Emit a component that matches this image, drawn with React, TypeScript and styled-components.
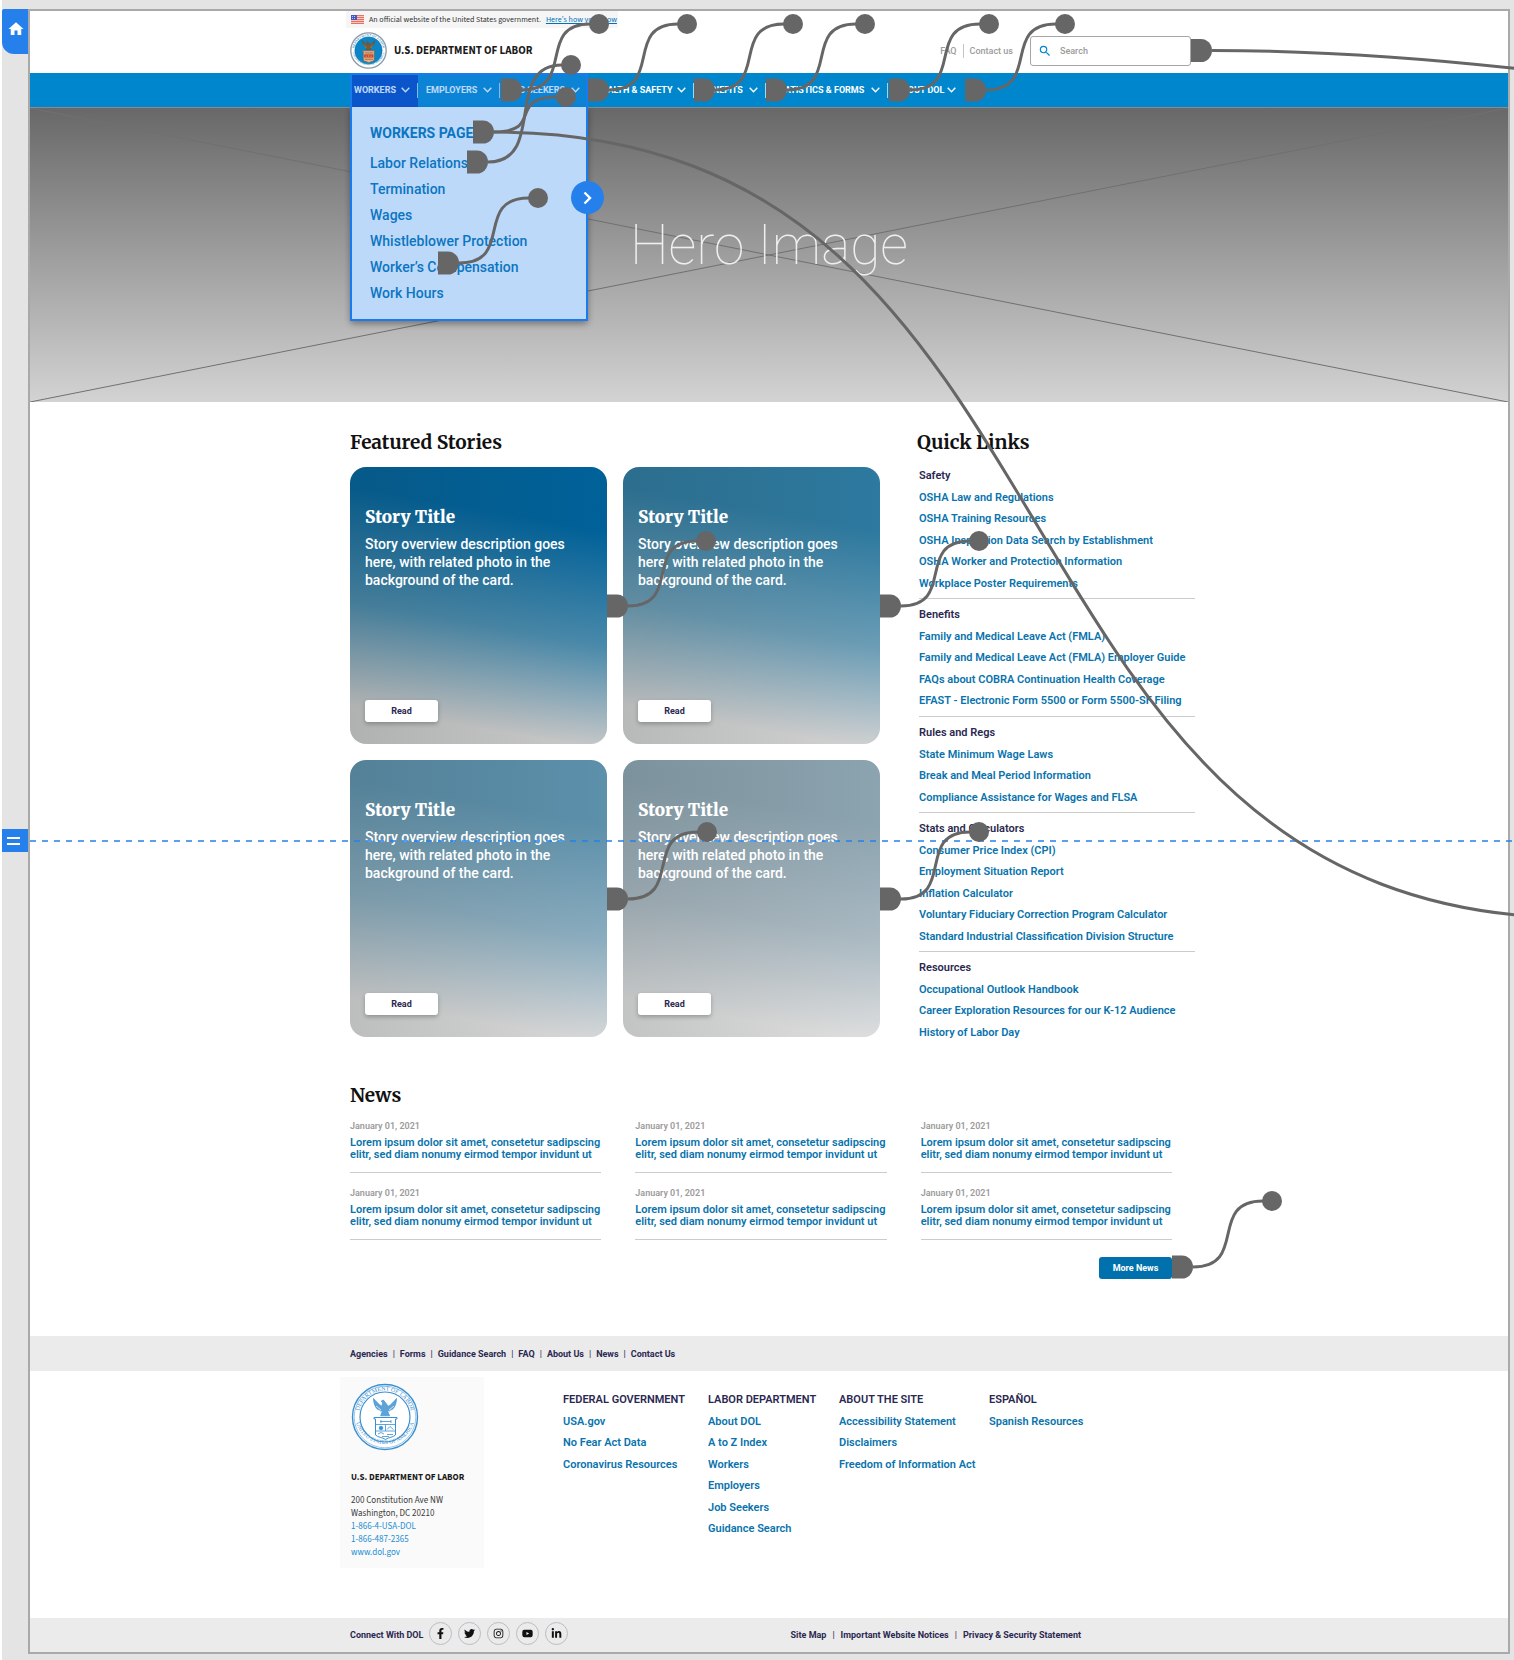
import React from "react";
import styled, { createGlobalStyle } from "styled-components";
import { FaFacebookF, FaTwitter, FaInstagram, FaYoutube, FaLinkedinIn } from "react-icons/fa";
import { MdHome, MdSearch } from "react-icons/md";

const sans = `Roboto, "Liberation Sans", Arial, sans-serif`;
const serif = `Merriweather, "Liberation Serif", Georgia, serif`;
const human = `"Source Sans 3", "Source Sans Pro", "Open Sans", "Noto Sans", sans-serif`;

const color = {
  link: "#0873ad",
  ink: "#2a2850",
  nav: "#0086cd",
  select: "#2680eb",
  wire: "#666666",
  rule: "#cccccc",
  bar: "#ebebeb",
  mute: "#9b9b9b",
};

const GlobalStyle = createGlobalStyle`
  *, *::before, *::after { box-sizing: border-box; }
  body { margin: 0; background: #ffffff; font-family: ${sans}; color: ${color.ink}; }
  h1, h2, h3, p, ul { margin: 0; padding: 0; }
  ul { list-style: none; }
  a { color: inherit; text-decoration: none; }
  svg { display: block; }
  button, input { font: inherit; color: inherit; border: 0; padding: 0; background: none; }
`;

/* ---------- Workspace ---------- */

const Workspace = styled.div`
  position: relative;
  min-height: 100vh;
  margin-left: 2px;
  padding: 9px 4px 6px 26px;
  background: #e4e4e4;
  overflow: hidden;
`;

const Artboard = styled.div`
  border: 2px solid #a9a9a9;
  background: #ffffff;
`;

const Container = styled.div`
  width: 100%;
  max-width: 852px;
  margin: 0 auto;
  padding-left: 7px;
`;

const HomeTab = styled.button`
  position: absolute;
  left: 0;
  top: 9px;
  width: 26px;
  height: 45px;
  display: flex;
  justify-content: center;
  padding: 11px 0 0 2px;
  border-radius: 2px 0 0 12px;
  background: ${color.select};
  color: #ffffff;
`;

const FoldTab = styled.button`
  position: absolute;
  left: 0;
  top: 829px;
  width: 26px;
  height: 23px;
  display: flex;
  flex-direction: column;
  align-items: flex-start;
  justify-content: center;
  gap: 4px;
  padding-left: 5px;
  background: ${color.select};
`;

const FoldBar = styled.span`
  width: 13px;
  height: 2px;
  background: #ffffff;
`;

const Wires = styled.svg`
  position: absolute;
  z-index: 3;
  left: -2px;
  top: 0;
  width: calc(100% + 2px);
  height: 100%;
  pointer-events: none;
`;

/* ---------- Header ---------- */

const GovBanner = styled.div`
  display: flex;
  align-items: center;
  width: 272px;
  height: 17px;
  margin-left: -4px;
  padding-left: 5px;
  gap: 5px;
  background: #f5f5f5;
  font: 400 8px/17px ${human};
  color: #333333;
`;

const BannerLink = styled.a`
  color: #0071bc;
  text-decoration: underline;
`;

const HeaderRow = styled.div`
  display: flex;
  align-items: center;
  height: 45px;
  padding-right: 4px;
`;

const Brand = styled.a`
  display: flex;
  align-items: center;
  gap: 7px;
  font: 700 11px/16px ${human};
  color: #1b1b1b;
`;

const Utility = styled.nav`
  display: flex;
  align-items: center;
  gap: 6px;
  margin: 0 17px 0 auto;
  font-size: 9px;
  font-weight: 500;
  color: ${color.mute};
`;

const UtilityRule = styled.span`
  width: 1px;
  height: 14px;
  background: #c4c4c4;
`;

const SearchBox = styled.label`
  display: flex;
  align-items: center;
  gap: 8px;
  width: 161px;
  height: 30px;
  padding: 0 7px;
  border: 1px solid #a6a6a6;
  border-radius: 3px;
  color: ${color.nav};
`;

const SearchInput = styled.input`
  flex: 1;
  min-width: 0;
  font-size: 9px;
  font-weight: 500;
  outline: none;
  &::placeholder { color: ${color.mute}; opacity: 1; }
`;

const NavBar = styled.nav`
  background: ${color.nav};
`;

const NavRow = styled(Container)`
  position: relative;
  display: grid;
  grid-template-columns: 68px 82px 88px 106px 72px 122px 76px;
  height: 34px;
`;

const NavItem = styled.button<{ $active?: boolean }>`
  position: relative;
  display: flex;
  align-items: center;
  justify-content: space-between;
  padding: 0 8px 0 ${(p) => (p.$active ? 4 : 8)}px;
  background: ${(p) => (p.$active ? "#0042be" : "transparent")};
  color: #ffffff;
  font-size: 9px;
  font-weight: 700;
  white-space: nowrap;
  &:not(:last-of-type)::after {
    content: "";
    position: absolute;
    right: 0;
    top: 10px;
    width: 1px;
    height: 15px;
    background: #a9d4ee;
  }
`;

const Menu = styled.div`
  position: absolute;
  z-index: 1;
  left: 7px;
  top: 34px;
  width: 238px;
  padding: 13px 0 15px 20px;
  border-radius: 0 0 4px 4px;
  background: #ffffff;
  box-shadow: 0 3px 6px rgba(0, 0, 0, 0.35);
  font-size: 14px;
  line-height: 26px;
  font-weight: 500;
  color: #0071b0;
`;

const MenuTitle = styled.a`
  display: block;
  margin-bottom: 4px;
  font-weight: 700;
`;

const Selection = styled.div`
  position: absolute;
  z-index: 2;
  left: 7px;
  top: 0;
  width: 238px;
  height: 248px;
  border: 2px solid #1a7bef;
  background: rgba(38, 128, 235, 0.3);
`;

const AddLink = styled.button`
  position: absolute;
  right: -18px;
  top: 106px;
  width: 33px;
  height: 33px;
  display: grid;
  place-items: center;
  border-radius: 50%;
  background: ${color.select};
  color: #ffffff;
`;

const Hero = styled.section`
  position: relative;
  display: grid;
  place-items: center;
  height: 295px;
  border-top: 1px solid #8a8a8a;
  background: linear-gradient(#686868, #d3d3d3);
`;

const HeroLines = styled.svg`
  position: absolute;
  inset: 0;
  width: 100%;
  height: 100%;
`;

const HeroTitle = styled.h1`
  position: relative;
  padding-bottom: 20px;
  font-size: 55px;
  line-height: 64px;
  font-weight: 100;
  color: #efefef;
`;

/* ---------- Main ---------- */

const Main = styled.main`
  padding: 27px 0 57px;
`;

const Columns = styled.div`
  display: grid;
  grid-template-columns: 530px 1fr;
  gap: 37px;
`;

const Heading = styled.h2`
  font: 700 19px/26px ${serif};
  color: #111111;
`;

const Cards = styled.div`
  display: grid;
  grid-template-columns: 1fr 1fr;
  gap: 16px;
  margin-top: 12px;
`;

const Card = styled.article<{ $from: string; $mid: string; $to: string }>`
  display: flex;
  flex-direction: column;
  align-items: flex-start;
  height: 277px;
  padding: 38px 15px 22px;
  border-radius: 16px;
  background: linear-gradient(to right, rgba(40, 50, 50, 0.16), rgba(40, 50, 50, 0)),
    linear-gradient(190deg, ${(p) => `${p.$from} 20%, ${p.$mid} 56%, ${p.$to} 88%`});
  color: #ffffff;
`;

const CardTitle = styled.h3`
  font: 900 17px/24px ${serif};
`;

const CardText = styled.p`
  margin-top: 6px;
  font-size: 14px;
  line-height: 18px;
  font-weight: 500;
`;

const Button = styled.button<{ $primary?: boolean }>`
  width: 73px;
  height: 22px;
  border-radius: 3px;
  font-size: 9px;
  font-weight: 700;
  background: ${(p) => (p.$primary ? "#0071ad" : "#ffffff")};
  color: ${(p) => (p.$primary ? "#ffffff" : color.ink)};
  box-shadow: ${(p) => (p.$primary ? "none" : "0 2px 4px rgba(0, 0, 0, 0.25)")};
`;

const ReadButton = styled(Button)`
  margin-top: auto;
`;

const Groups = styled.div`
  margin: 10px 0 0 2px;
`;

const Group = styled.section`
  &:not(:last-child) {
    padding-bottom: 4px;
    margin-bottom: 5px;
    border-bottom: 1px solid ${color.rule};
  }
`;

const GroupTitle = styled.h3`
  font-size: 11px;
  line-height: 22px;
  font-weight: 600;
  color: ${color.ink};
`;

const LinkItem = styled.li`
  font-size: 11px;
  line-height: 21px;
  font-weight: 600;
  color: ${color.link};
  white-space: nowrap;
  &:nth-child(even) { line-height: 22px; }
`;

const News = styled.section`
  display: flex;
  flex-direction: column;
  align-items: flex-end;
  width: 822px;
  margin-top: 39px;
`;

const NewsHeading = styled(Heading)`
  align-self: flex-start;
`;

const NewsGrid = styled.div`
  display: grid;
  grid-template-columns: repeat(3, 1fr);
  gap: 13px 34px;
  width: 100%;
  margin: 11px 0 17px;
`;

const NewsItem = styled.article`
  padding-bottom: 11px;
  border-bottom: 1px solid ${color.rule};
`;

const NewsDate = styled.p`
  font-size: 9px;
  line-height: 14px;
  font-weight: 600;
  color: ${color.mute};
`;

const NewsLink = styled.a`
  display: block;
  margin-top: 4px;
  font-size: 11px;
  line-height: 12px;
  font-weight: 600;
  color: ${color.link};
  white-space: nowrap;
`;

/* ---------- Footer ---------- */

const Bar = styled.div<{ $height: number }>`
  background: ${color.bar};
  ${Container} {
    display: flex;
    align-items: center;
    height: ${(p) => p.$height}px;
  }
`;

const InlineLinks = styled.ul`
  display: flex;
  font-size: 9px;
  font-weight: 700;
  color: ${color.ink};
  li + li::before {
    content: "|";
    margin: 0 5px;
    font-weight: 400;
  }
`;

const RightLinks = styled(InlineLinks)`
  margin: 0 114px 0 auto;
  li + li::before { margin: 0 6px; }
`;

const FooterMain = styled(Container)`
  display: flex;
  padding-top: 6px;
  padding-bottom: 50px;
`;

const Office = styled.address`
  width: 144px;
  margin-left: -10px;
  padding: 6px 10px 9px 11px;
  background: #fafafa;
  font: 400 9px/13px ${human};
  color: #3a3a3a;
`;

const OfficeName = styled.p`
  margin: 21px 0 10px;
  font-weight: 700;
  line-height: 12px;
  color: #1b1b1b;
`;

const OfficeLink = styled.a`
  display: block;
  color: #1b8fd2;
`;

const SiteMap = styled.div`
  display: grid;
  grid-template-columns: 145px 131px 150px auto;
  align-content: start;
  margin-left: 79px;
  padding-top: 12px;
`;

const Social = styled.ul`
  display: flex;
  gap: 6px;
  margin: 0 0 4px 6px;
`;

const SocialLink = styled.a`
  display: grid;
  place-items: center;
  width: 23px;
  height: 23px;
  border: 1px solid #bcbcc4;
  border-radius: 50%;
  color: #111111;
`;

const Connect = styled.span`
  font-size: 9px;
  font-weight: 700;
`;

/* ---------- Drawings ---------- */

const Chevron = () => (
  <svg width="9" height="6" viewBox="0 0 9 6" fill="none" stroke="currentColor" strokeWidth="1.4">
    <path d="M0.7 0.8 4.5 4.8 8.3 0.8" />
  </svg>
);

const Flag = () => (
  <svg width="13" height="9" viewBox="0 0 13 9">
    <rect width="13" height="9" fill="#f7c9c4" />
    {[0, 2, 4, 6, 8].map((y) => (
      <rect key={y} y={y} width="13" height="1" fill="#e8705f" />
    ))}
    <rect width="6" height="5" fill="#4556c4" />
    <path d="M1 1.5h4M1 3.5h4" stroke="#b9c0f0" strokeDasharray="1 1" />
  </svg>
);

const Seal = ({ size, full }: { size: number; full?: boolean }) => {
  const line = full ? "#8a5a2b" : "#3b8fd0";
  return (
    <svg width={size} height={size} viewBox="0 0 68 68" fill="none">
      <circle cx="34" cy="34" r="32.5" fill="#ffffff" stroke={full ? "#8d9aa5" : line} strokeWidth={full ? 2.4 : 1.4} />
      {!full && <circle cx="34" cy="34" r="30.8" stroke={line} strokeWidth="0.5" />}
      <circle cx="34" cy="34" r="25" fill={full ? "#0a86c8" : "#ffffff"} stroke={full ? "#0a6ca4" : line} strokeWidth="1.2" />
      <path id={`arc-top-${size}`} d="M8.4 40.5A26.4 26.4 0 1 1 59.6 40.5" />
      <path id={`arc-low-${size}`} d="M4.4 37.5A30.4 30.4 0 0 0 63.6 37.5" />
      <g fill={line} fontFamily='"Liberation Serif", serif' fontSize="6" textAnchor="middle">
        <text fill={full ? "#4d9fd0" : line}>
          <textPath href={`#arc-top-${size}`} startOffset="50%">DEPARTMENT OF LABOR</textPath>
        </text>
        <text fill={full ? "#4d9fd0" : line} fontSize="5.5">
          <textPath href={`#arc-low-${size}`} startOffset="50%">UNITED STATES OF AMERICA</textPath>
        </text>
      </g>
      <path
        d="M34 19l-1.6-2-2.4 1.2 1.6 1.4-.6 3.6c-3-1.4-5.6-4.6-8.6-7.8.2 5.2 1.8 8.8 4.4 11.2l4.2 2.4-1.4 3.8h9l-1.6-3.8 4.4-2.6c2.6-2.4 4-6 4.2-11-3 3.2-5.4 6.4-8.4 7.8z"
        fill={full ? "#7c5a33" : "#5ea3d8"}
        stroke={full ? "#5c4325" : line}
        strokeWidth="0.6"
      />
      <path d="M25 23l5 4M27 27l4 2M43 23l-5 4M41 27l-4 2" stroke={full ? "#c79a5a" : "#ffffff"} strokeWidth="0.7" />
      <path
        d="M23 34.5H46V36H44.5V52C42 54.5 38 54 34.5 56.5 31 54 27 54.5 24.5 52V36H23z"
        fill={full ? "#e9b48a" : "#ffffff"}
        stroke={line}
        strokeWidth="1"
      />
      {full ? (
        <g>
          <path d="M26 41h17v6H26z" fill="#c8452d" />
          <path d="M27 38.5h15M27 50h15" stroke="#8a5a2b" strokeWidth="1.4" />
          <path d="M30 43v3M34.5 42v4M39 43v3" stroke="#f2c38f" />
        </g>
      ) : (
        <g stroke={line} strokeWidth="0.8">
          <path d="M24.5 41.5h20M29 38.5h11M30 37v3M40 37v3M24.5 48h20M34.5 41.5v6.5" />
          <circle cx="30" cy="45" r="1.8" fill={line} />
          <path d="M36 46.5l3-3 3.5 3M27 51l3-1.5 3 1.5M36 51.5h6M31 53.5h7" />
        </g>
      )}
    </svg>
  );
};

type Wire = { from: [number, number]; to: [number, number] };

const wires: Wire[] = [
  { from: [501, 90], to: [599, 24] },
  { from: [588, 90], to: [687, 24] },
  { from: [694, 90], to: [793, 24] },
  { from: [766, 90], to: [865, 24] },
  { from: [889, 90], to: [989, 24] },
  { from: [965, 90], to: [1065, 24] },
  { from: [473, 132], to: [566, 97] },
  { from: [467, 162], to: [571, 65] },
  { from: [438, 263], to: [538, 198] },
  { from: [607, 606], to: [706, 541] },
  { from: [880, 606], to: [979, 541] },
  { from: [607, 899], to: [707, 832] },
  { from: [880, 899], to: [979, 832] },
  { from: [1172, 1267], to: [1272, 1201] },
];

const handle = (x: number, y: number) =>
  `M${x} ${y - 11.5}h10a11 11.5 0 0 1 0 23h-10z`;

const curve = ({ from, to }: Wire) => {
  const x0 = from[0] + 21;
  const x1 = to[0] - 9;
  const k = (x1 - x0) * 0.8;
  return `M${x0} ${from[1]}C${x0 + k} ${from[1]} ${x1 - k} ${to[1]} ${x1} ${to[1]}`;
};

const PrototypeWires = () => (
  <Wires aria-hidden="true">
    <line x1="30" x2="100%" y1="841" y2="841" stroke="#2680eb" strokeWidth="1.5" strokeDasharray="6 6" />
    <g fill="none" stroke={color.wire} strokeWidth="3">
      {wires.map((w) => (
        <path key={w.from.join()} d={curve(w)} />
      ))}
      <path d="M494 132C1110 132 964 918 1580 918" />
      <path d="M1212 50.5C1330 50.5 1430 59 1520 69" />
    </g>
    <g fill={color.wire}>
      {wires.map((w) => (
        <g key={w.from.join()}>
          <path d={handle(w.from[0], w.from[1])} />
          <circle cx={w.to[0]} cy={w.to[1]} r="10" />
        </g>
      ))}
      <path d={handle(1191, 50.5)} />
    </g>
  </Wires>
);

/* ---------- Content ---------- */

const navItems = [
  "WORKERS",
  "EMPLOYERS",
  "JOB SEEKERS",
  "HEALTH & SAFETY",
  "BENEFITS",
  "STATISTICS & FORMS",
  "ABOUT DOL",
];

const menuItems = [
  "Labor Relations",
  "Termination",
  "Wages",
  "Whistleblower Protection",
  "Worker’s Compensation",
  "Work Hours",
];

const cards = [
  { from: "#006199", mid: "#4a8aab", to: "#cacaca" },
  { from: "#2d799f", mid: "#6b9db6", to: "#d3d3d3" },
  { from: "#5c90ab", mid: "#8badbf", to: "#d9d9d9" },
  { from: "#8ca4b0", mid: "#abbac3", to: "#e0e0e0" },
];

const quickLinks = [
  {
    title: "Safety",
    links: [
      "OSHA Law and Regulations",
      "OSHA Training Resources",
      "OSHA Inspection Data Search by Establishment",
      "OSHA Worker and Protection Information",
      "Workplace Poster Requirements",
    ],
  },
  {
    title: "Benefits",
    links: [
      "Family and Medical Leave Act (FMLA)",
      "Family and Medical Leave Act (FMLA) Employer Guide",
      "FAQs about COBRA Continuation Health Coverage",
      "EFAST - Electronic Form 5500 or Form 5500-SF Filing",
    ],
  },
  {
    title: "Rules and Regs",
    links: [
      "State Minimum Wage Laws",
      "Break and Meal Period Information",
      "Compliance Assistance for Wages and FLSA",
    ],
  },
  {
    title: "Stats and Calculators",
    links: [
      "Consumer Price Index (CPI)",
      "Employment Situation Report",
      "Inflation Calculator",
      "Voluntary Fiduciary Correction Program Calculator",
      "Standard Industrial Classification Division Structure",
    ],
  },
  {
    title: "Resources",
    links: [
      "Occupational Outlook Handbook",
      "Career Exploration Resources for our K-12 Audience",
      "History of Labor Day",
    ],
  },
];

const siteMap = [
  { title: "FEDERAL GOVERNMENT", links: ["USA.gov", "No Fear Act Data", "Coronavirus Resources"] },
  {
    title: "LABOR DEPARTMENT",
    links: ["About DOL", "A to Z Index", "Workers", "Employers", "Job Seekers", "Guidance Search"],
  },
  { title: "ABOUT THE SITE", links: ["Accessibility Statement", "Disclaimers", "Freedom of Information Act"] },
  { title: "ESPAÑOL", links: ["Spanish Resources"] },
];

const barLinks = ["Agencies", "Forms", "Guidance Search", "FAQ", "About Us", "News", "Contact Us"];
const legalLinks = ["Site Map", "Important Website Notices", "Privacy & Security Statement"];

const socials = [
  { name: "Facebook", Icon: FaFacebookF },
  { name: "Twitter", Icon: FaTwitter },
  { name: "Instagram", Icon: FaInstagram },
  { name: "YouTube", Icon: FaYoutube },
  { name: "LinkedIn", Icon: FaLinkedinIn },
];

const LinkList = ({ title, links }: { title: string; links: string[] }) => (
  <>
    <GroupTitle>{title}</GroupTitle>
    <ul>
      {links.map((text) => (
        <LinkItem key={text}>
          <a href="#">{text}</a>
        </LinkItem>
      ))}
    </ul>
  </>
);

export default function App() {
  return (
    <>
      <GlobalStyle />
      <Workspace>
        <HomeTab aria-label="Home artboard">
          <MdHome size={18} />
        </HomeTab>
        <FoldTab aria-label="Viewport fold">
          <FoldBar />
          <FoldBar />
        </FoldTab>
        <Artboard>
          <header>
            <Container>
              <GovBanner>
                <Flag />
                <span>An official website of the United States government.</span>
                <BannerLink href="#">Here's how you know</BannerLink>
              </GovBanner>
              <HeaderRow>
                <Brand href="#">
                  <Seal size={37} full />
                  U.S. DEPARTMENT OF LABOR
                </Brand>
                <Utility aria-label="Utility">
                  <a href="#">FAQ</a>
                  <UtilityRule />
                  <a href="#">Contact us</a>
                </Utility>
                <SearchBox aria-label="Search">
                  <MdSearch size={14} />
                  <SearchInput type="search" placeholder="Search" aria-label="Search" />
                </SearchBox>
              </HeaderRow>
            </Container>
            <NavBar aria-label="Main">
              <NavRow>
                {navItems.map((item, i) => (
                  <NavItem key={item} $active={i === 0}>
                    {item}
                    <Chevron />
                  </NavItem>
                ))}
                <Menu>
                  <MenuTitle href="#">WORKERS PAGE</MenuTitle>
                  <ul>
                    {menuItems.map((item) => (
                      <li key={item}>
                        <a href="#">{item}</a>
                      </li>
                    ))}
                  </ul>
                </Menu>
                <Selection>
                  <AddLink aria-label="Connect">
                    <svg width="9" height="14" viewBox="0 0 9 14" fill="none" stroke="currentColor" strokeWidth="2.4">
                      <path d="M1.5 1.5 7 7 1.5 12.5" />
                    </svg>
                  </AddLink>
                </Selection>
              </NavRow>
            </NavBar>
          </header>
          <Hero>
            <HeroLines aria-hidden="true">
              <g stroke="#707070" strokeWidth="1">
                <line x1="0" y1="0" x2="100%" y2="100%" />
                <line x1="0" y1="100%" x2="100%" y2="0" />
              </g>
            </HeroLines>
            <HeroTitle>Hero Image</HeroTitle>
          </Hero>
          <Main>
            <Container>
              <Columns>
                <section>
                  <Heading>Featured Stories</Heading>
                  <Cards>
                    {cards.map((c) => (
                      <Card key={c.from} $from={c.from} $mid={c.mid} $to={c.to}>
                        <CardTitle>Story Title</CardTitle>
                        <CardText>
                          Story overview description goes
                          <br />
                          here, with related photo in the
                          <br />
                          background of the card.
                        </CardText>
                        <ReadButton>Read</ReadButton>
                      </Card>
                    ))}
                  </Cards>
                </section>
                <aside>
                  <Heading>Quick Links</Heading>
                  <Groups>
                    {quickLinks.map((g) => (
                      <Group key={g.title}>
                        <LinkList title={g.title} links={g.links} />
                      </Group>
                    ))}
                  </Groups>
                </aside>
              </Columns>
              <News>
                <NewsHeading>News</NewsHeading>
                <NewsGrid>
                  {[0, 1, 2, 3, 4, 5].map((n) => (
                    <NewsItem key={n}>
                      <NewsDate>January 01, 2021</NewsDate>
                      <NewsLink href="#">
                        Lorem ipsum dolor sit amet, consetetur sadipscing
                        <br />
                        elitr, sed diam nonumy eirmod tempor invidunt ut
                      </NewsLink>
                    </NewsItem>
                  ))}
                </NewsGrid>
                <Button $primary>More News</Button>
              </News>
            </Container>
          </Main>
          <footer>
            <Bar $height={35}>
              <Container>
                <InlineLinks>
                  {barLinks.map((text) => (
                    <li key={text}>
                      <a href="#">{text}</a>
                    </li>
                  ))}
                </InlineLinks>
              </Container>
            </Bar>
            <FooterMain>
              <Office>
                <Seal size={68} />
                <OfficeName>U.S. DEPARTMENT OF LABOR</OfficeName>
                200 Constitution Ave NW
                <br />
                Washington, DC 20210
                <OfficeLink href="#">1-866-4-USA-DOL</OfficeLink>
                <OfficeLink href="#">1-866-487-2365</OfficeLink>
                <OfficeLink href="#">www.dol.gov</OfficeLink>
              </Office>
              <SiteMap>
                {siteMap.map((g) => (
                  <section key={g.title}>
                    <LinkList title={g.title} links={g.links} />
                  </section>
                ))}
              </SiteMap>
            </FooterMain>
            <Bar $height={34}>
              <Container>
                <Connect>Connect With DOL</Connect>
                <Social>
                  {socials.map(({ name, Icon }) => (
                    <li key={name}>
                      <SocialLink href="#" aria-label={name}>
                        <Icon size={11} />
                      </SocialLink>
                    </li>
                  ))}
                </Social>
                <RightLinks>
                  {legalLinks.map((text) => (
                    <li key={text}>
                      <a href="#">{text}</a>
                    </li>
                  ))}
                </RightLinks>
              </Container>
            </Bar>
          </footer>
        </Artboard>
        <PrototypeWires />
      </Workspace>
    </>
  );
}
